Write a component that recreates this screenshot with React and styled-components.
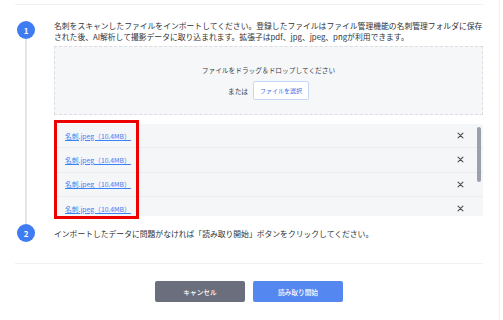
import React from 'react';
import styled, { createGlobalStyle } from 'styled-components';

const GlobalStyle = createGlobalStyle`
   html, body {
      margin: 0;
      padding: 0;
      background: #ffffff;
   }
   * {
      box-sizing: border-box;
   }
`;

const files = [
   { name: '名刺.jpeg（10.4MB）' },
   { name: '名刺.jpeg（10.4MB）' },
   { name: '名刺.jpeg（10.4MB）' },
   { name: '名刺.jpeg（10.4MB）' },
];

const CloseIcon = () => (
   <svg width="7" height="7" viewBox="0 0 10 10">
      <path d="M1.5 1.5 L8.5 8.5 M8.5 1.5 L1.5 8.5" stroke="#4a4f5a" strokeWidth="1.6" strokeLinecap="round" />
   </svg>
);

const App = () => {
   return (
      <Page>
         <GlobalStyle />
         <Rule $top={4} />
         <Steps>
            <Step $pad={8}>
               <Rail>
                  <Circle $offset={1.5}>1</Circle>
                  <Connector />
               </Rail>
               <Body>
                  <Text>
                     名刺をスキャンしたファイルをインポートしてください。登録したファイルはファイル管理機能の名刺管理フォルダに保存された後、AI解析して撮影データに取り込まれます。拡張子はpdf、jpg、jpeg、pngが利用できます。
                  </Text>
                  <DropZone>
                     <DropText>ファイルをドラッグ＆ドロップしてください</DropText>
                     <PickRow>
                        <DropText>または</DropText>
                        <PickButton>ファイルを選択</PickButton>
                     </PickRow>
                  </DropZone>
                  <ListWrap>
                     <FileList>
                        {files.map((f, i) => (
                           <FileRow key={i}>
                              <FileLink>{f.name}</FileLink>
                              <RemoveButton><CloseIcon /></RemoveButton>
                           </FileRow>
                        ))}
                        <ScrollThumb />
                     </FileList>
                     <Highlight />
                  </ListWrap>
               </Body>
            </Step>
            <Step $pad={21} $center>
               <Rail>
                  <Circle>2</Circle>
               </Rail>
               <Body>
                  <Text>インポートしたデータに問題がなければ「読み取り開始」ボタンをクリックしてください。</Text>
               </Body>
            </Step>
         </Steps>
         <Rule />
         <Actions>
            <ActionButton $variant="cancel">キャンセル</ActionButton>
            <ActionButton $variant="primary">読み取り開始</ActionButton>
         </Actions>
      </Page>
   );
};

export default App;

const Page = styled.div`
   width: 500px;
   height: 320px;
   padding: 0 16px 0 15px;
   border-right: 1px solid #eef0f3;
   background: #ffffff;
   font-family: "Noto Sans CJK JP", "Noto Sans", sans-serif;
   color: #2f3136;
   overflow: hidden;
`;

const Rule = styled.div`
   height: 1px;
   margin-top: ${p => p.$top || 0}px;
   background: #f0f1f4;
`;

const Steps = styled.div`
   display: flex;
   flex-direction: column;
   padding-top: 14.5px;
`;

const Step = styled.div`
   display: grid;
   grid-template-columns: 39px 1fr;
   align-items: ${p => p.$center ? 'center' : 'stretch'};
   padding-bottom: ${p => p.$pad}px;
`;

const Rail = styled.div`
   display: flex;
   flex-direction: column;
   align-items: center;
   width: 18px;
   margin-left: 2px;
   height: 100%;
   margin-bottom: ${p => p.$extend ? 0 : 0}px;
`;

const Circle = styled.div`
   width: 18px;
   height: 18px;
   margin-top: ${p => p.$offset || 0}px;
   border-radius: 50%;
   background: #3f7bf1;
   color: #ffffff;
   font-size: 8px;
   font-weight: 700;
   display: flex;
   align-items: center;
   justify-content: center;
   flex-shrink: 0;
`;

const Connector = styled.div`
   flex: 1;
   width: 2px;
   margin-bottom: -8px;
   background: #e3e5e9;
`;

const Body = styled.div`
   display: flex;
   flex-direction: column;
   min-width: 0;
`;

const Text = styled.p`
   margin: 0;
   font-size: 7.8px;
   line-height: 11px;
   color: #2f3136;
`;

const DropZone = styled.div`
   height: 69px;
   margin-top: 4.5px;
   padding-top: 18px;
   border: 1px dashed #dadde2;
   background: #f6f7f9;
   display: flex;
   flex-direction: column;
   align-items: center;
   gap: 6px;
`;

const DropText = styled.span`
   font-size: 6.7px;
   line-height: 10px;
   color: #3a3d44;
`;

const PickRow = styled.div`
   display: flex;
   align-items: center;
   gap: 5px;
`;

const PickButton = styled.button`
   width: 56px;
   height: 19px;
   padding: 0;
   border: 1px solid #c6d6f8;
   border-radius: 2px;
   background: #ffffff;
   color: #3a6fe6;
   font-family: inherit;
   font-size: 6px;
   cursor: pointer;
`;

const ListWrap = styled.div`
   position: relative;
   margin-top: 9px;
`;

const FileList = styled.div`
   position: relative;
   height: 92px;
   overflow: hidden;
   border-radius: 2px;
   background: #f5f6f8;
`;

const FileRow = styled.div`
   height: 24.3px;
   display: flex;
   align-items: center;
   justify-content: space-between;
   padding: 0 19px 0 11px;
   border-bottom: 1px solid #eaecef;
`;

const FileLink = styled.a`
   font-size: 6.8px;
   color: #3b82f6;
   text-decoration: underline;
   cursor: pointer;
`;

const RemoveButton = styled.button`
   display: flex;
   padding: 0;
   border: none;
   background: transparent;
   cursor: pointer;
`;

const ScrollThumb = styled.div`
   position: absolute;
   top: 3px;
   right: 2px;
   width: 4px;
   height: 55px;
   border-radius: 2px;
   background: #9aa0ab;
`;

const Highlight = styled.div`
   position: absolute;
   top: -4px;
   left: 0;
   width: 85px;
   height: 99px;
   border: 3px solid #ec0000;
   pointer-events: none;
`;

const Actions = styled.div`
   display: flex;
   justify-content: center;
   gap: 8px;
   margin-top: 17px;
`;

const ActionButton = styled.button`
   width: 90px;
   height: 21px;
   border: none;
   border-radius: 2px;
   background: ${p => p.$variant === 'primary' ? '#5587f0' : '#6b6e7c'};
   color: #ffffff;
   font-family: inherit;
   font-size: 6.7px;
   font-weight: 500;
   cursor: pointer;
`;
